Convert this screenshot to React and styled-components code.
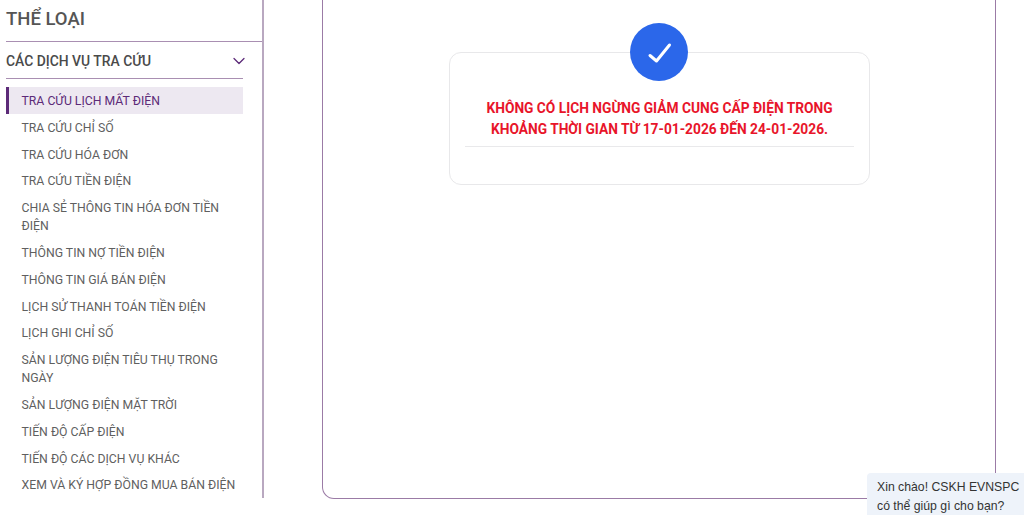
import React from 'react';
import styled, { createGlobalStyle } from 'styled-components';
import { ChevronDown } from 'lucide-react';

const GlobalStyle = createGlobalStyle`
  html, body {
    margin: 0;
    padding: 0;
    height: 515px;
    overflow: hidden;
    background: #fff;
  }
  * { box-sizing: border-box; }
`;

const Page = styled.div`
  display: flex;
  width: 1024px;
  height: 515px;
  overflow: hidden;
  font-family: Roboto, sans-serif;
`;

const Sidebar = styled.aside`
  width: 264px;
  height: 498px;
  flex-shrink: 0;
  padding-left: 6px;
  border-right: 2px solid #b9a8c0;
  overflow: hidden;
`;

const Title = styled.h2`
  margin: 0;
  height: 42px;
  padding-top: 6px;
  font-size: 18.5px;
  line-height: 26px;
  font-weight: 500;
  color: #555;
  border-bottom: 1px solid #a98fb2;
`;

const Group = styled.div`
  width: 237px;
`;

const GroupHead = styled.div`
  display: flex;
  align-items: center;
  justify-content: space-between;
  height: 37px;
  padding-top: 2px;
  font-size: 13.9px;
  font-weight: 500;
  color: #4a4a4a;
  border-bottom: 1px solid #a98fb2;
`;

const Chevron = styled(ChevronDown)`
  margin-right: -6px;
  color: #5c2a78;
`;

const MenuList = styled.ul`
  list-style: none;
  margin: 8px 0 0;
  padding: 0;
`;

const MenuItem = styled.li`
  padding: 5px 4px 3.8px 15.5px;
  font-size: 12.25px;
  line-height: 18px;
  color: ${p => (p.$active ? '#5c2a78' : '#5f5f5f')};
  background: ${p => (p.$active ? '#ede8f1' : 'transparent')};
  box-shadow: ${p => (p.$active ? 'inset 3px 0 0 #5c2a78' : 'none')};
`;

const Main = styled.main`
  width: 674px;
  height: 499px;
  margin-left: 58px;
  border: 1px solid #9b7ba6;
  border-top: none;
  border-radius: 0 0 12px 12px;
  padding: 52px 0 0 126px;
`;

const Card = styled.section`
  position: relative;
  width: 421px;
  height: 133px;
  padding: 45px 15px 0;
  border: 1px solid #e8e8ea;
  border-radius: 12px;
  background: #fff;
`;

const Badge = styled.div`
  position: absolute;
  top: -30px;
  left: 180px;
  width: 58px;
  height: 58px;
  border-radius: 50%;
  background: #2b67ea;
`;

const CheckMark = () => (
  <svg width="58" height="58" viewBox="0 0 58 58" fill="none">
    <path
      d="M20 32.5 L26.5 38 L39.5 22"
      stroke="#fff"
      strokeWidth="3"
      strokeLinecap="round"
      strokeLinejoin="round"
    />
  </svg>
);

const Message = styled.p`
  margin: 0;
  padding-bottom: 6px;
  text-align: center;
  font-size: 13.76px;
  line-height: 21px;
  font-weight: 700;
  color: #e8152a;
  border-bottom: 1px solid #e9e9eb;
`;

const ChatBubble = styled.div`
  position: fixed;
  right: 0;
  bottom: 0;
  width: 157px;
  height: 42px;
  padding: 5px 0 0 10px;
  background: #eef3fa;
  border-radius: 4px 0 0 0;
  font-family: 'Liberation Sans', Arial, sans-serif;
  font-size: 12.25px;
  line-height: 18.5px;
  color: #333;
  white-space: nowrap;
`;

const items = [
  'TRA CỨU LỊCH MẤT ĐIỆN',
  'TRA CỨU CHỈ SỐ',
  'TRA CỨU HÓA ĐƠN',
  'TRA CỨU TIỀN ĐIỆN',
  'CHIA SẺ THÔNG TIN HÓA ĐƠN TIỀN ĐIỆN',
  'THÔNG TIN NỢ TIỀN ĐIỆN',
  'THÔNG TIN GIÁ BÁN ĐIỆN',
  'LỊCH SỬ THANH TOÁN TIỀN ĐIỆN',
  'LỊCH GHI CHỈ SỐ',
  'SẢN LƯỢNG ĐIỆN TIÊU THỤ TRONG NGÀY',
  'SẢN LƯỢNG ĐIỆN MẶT TRỜI',
  'TIẾN ĐỘ CẤP ĐIỆN',
  'TIẾN ĐỘ CÁC DỊCH VỤ KHÁC',
  'XEM VÀ KÝ HỢP ĐỒNG MUA BÁN ĐIỆN',
];

export default function App() {
  return (
    <>
      <GlobalStyle />
      <Page>
        <Sidebar>
          <Title>THỂ LOẠI</Title>
          <Group>
            <GroupHead>
              CÁC DỊCH VỤ TRA CỨU
              <Chevron size={20} strokeWidth={1.5} />
            </GroupHead>
            <MenuList>
              {items.map((item, i) => (
                <MenuItem key={item} $active={i === 0}>{item}</MenuItem>
              ))}
            </MenuList>
          </Group>
        </Sidebar>
        <Main>
          <Card>
            <Badge><CheckMark /></Badge>
            <Message>
              KHÔNG CÓ LỊCH NGỪNG GIẢM CUNG CẤP ĐIỆN TRONG
              <br />
              KHOẢNG THỜI GIAN TỪ 17-01-2026 ĐẾN 24-01-2026.
            </Message>
          </Card>
        </Main>
      </Page>
      <ChatBubble>
        Xin chào! CSKH EVNSPC
        <br />
        có thể giúp gì cho bạn?
      </ChatBubble>
    </>
  );
}
